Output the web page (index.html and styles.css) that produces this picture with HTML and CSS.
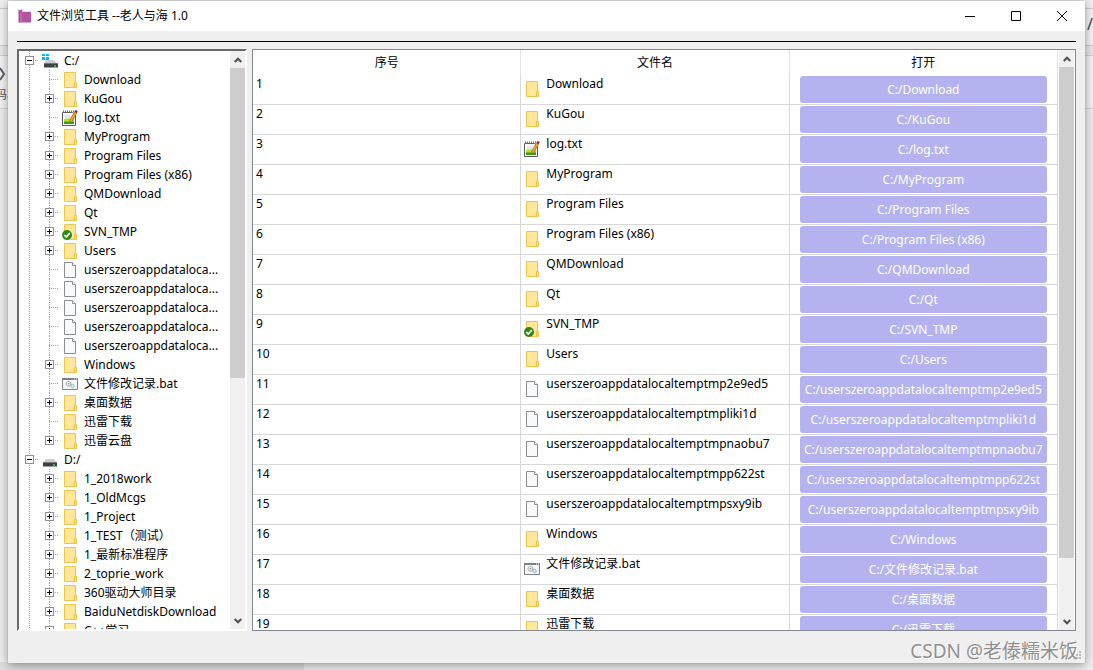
FILE: index.html
```html
<!DOCTYPE html>
<html lang="zh-CN">
<head>
<meta charset="utf-8">
<title>文件浏览工具 --老人与海 1.0</title>
<link rel="stylesheet" href="styles.css">
</head>
<body>
<svg class="sprite" aria-hidden="true">
  <symbol id="i-folder" viewBox="0 0 16 16">
    <path d="M2.500.5h11v10h1v5h-12z" fill="#ffe699" stroke="#ebc64f"/>
    <path d="M12.500 15v-4.500h1" fill="none" stroke="#e6bf42"/>
  </symbol>
  <symbol id="i-file" viewBox="0 0 16 16">
    <path d="M2.500.5h8l3 3v12h-11z" fill="#f8f9fa" stroke="#8b8d8f"/>
    <path d="M10.500.5v3h3" fill="#fff" stroke="#8b8d8f"/>
  </symbol>
  <symbol id="i-svn" viewBox="0 0 16 16">
    <use href="#i-folder"/>
    <circle cx="5" cy="11" r="5" fill="#2f8a12"/>
    <path d="M2.300 11l2 2 3.500-4" fill="none" stroke="#fff" stroke-width="1.700"/>
  </symbol>
  <symbol id="i-note" viewBox="0 0 16 16">
    <path d="M.5 2.500h10l3 3v10H.5z" fill="#fff" stroke="#5b5b5b"/>
    <path d="M1 1.500h11" stroke="#777" stroke-width="2" stroke-dasharray="1 1"/>
    <path d="M3 6h5M3 8h5" stroke="#c9cdd0"/>
    <path d="M2 9l10-1v6H2z" fill="#b8e030"/>
    <path d="M2 11.500h10V14H2z" fill="#3c9b16"/>
    <path d="M13.500 2.500l-5 9" stroke="#8a5a12" stroke-width="3"/>
    <path d="M13.500 2.500l-5 9" stroke="#f2a51e" stroke-width="2"/>
    <path d="M13.500 2.500l1.200-2" stroke="#a01818" stroke-width="2.500"/>
  </symbol>
  <symbol id="i-bat" viewBox="0 0 16 16">
    <path d="M.5 2.500h15v11H.5z" fill="#f4f6f7" stroke="#7d8184"/>
    <path d="M0 3h16" stroke="#7d8184" stroke-width="2"/>
    <path d="M12 3h1M14 3h1" stroke="#fff"/>
    <circle cx="6.500" cy="7.800" r="2.400" fill="#eee" stroke="#8b8f92" stroke-dasharray="1.200 .4"/>
    <circle cx="6.500" cy="7.800" r=".8" fill="#8b8f92"/>
    <circle cx="10.500" cy="10" r="1.700" fill="#d8effa" stroke="#6fa9c8" stroke-dasharray="1.200 .3"/>
  </symbol>
  <symbol id="i-drive" viewBox="0 0 16 16">
    <path d="M4 7h8l3 4H1z" fill="#c9cbcc"/>
    <path d="M1 10.500h14v4H1z" fill="#3d4145"/>
    <path d="M1 10.500h14" stroke="#73777a"/>
    <path d="M11 13h2" stroke="#36e03c" stroke-width="1.500"/>
  </symbol>
  <symbol id="i-system" viewBox="0 0 16 16">
    <path d="M4 7h8l3 4H2z" fill="#c9cbcc"/>
    <path d="M2 10.500h14v4H2z" fill="#3d4145"/>
    <path d="M2 10.500h14" stroke="#73777a"/>
    <path d="M12 13h2" stroke="#36e03c" stroke-width="1.500"/>
    <path d="M0 1h3v2H0zM4 1h3v2H4zM0 4h3v3H0zM4 4h3v3H4z" fill="#0cb4ef"/>
  </symbol>
  <symbol id="i-up" viewBox="0 0 8 6"><path d="M.7 5L4 1.700 7.300 5" fill="none" stroke="#505050" stroke-width="2"/></symbol>
  <symbol id="i-down" viewBox="0 0 8 6"><path d="M.7 1L4 4.300 7.300 1" fill="none" stroke="#505050" stroke-width="2"/></symbol>
</svg>

<div class="backdrop" aria-hidden="true">
  <svg class="back-arrow" viewBox="0 0 6 14"><path d="M0 1l4 6-4 6" fill="none" stroke="#5d6068" stroke-width="2"/></svg>
  <span class="back-label">码块</span>
  <span class="back-slash">/</span>
  <span class="back-strip"></span>
</div>

<main class="window">
  <header class="titlebar">
    <svg class="logo" viewBox="0 0 14 14"><path d="M1 1.500l3-1 1 1.500h8v11.500H1z" fill="#b653a0"/><path d="M4 2.500h9" stroke="#f1d5eb"/><path d="M3 4v9.500" stroke="#d07fbe"/><path d="M1 .5v13" stroke="#a04590"/></svg>
    <h1>文件浏览工具 --老人与海 1.0</h1>
    <button class="win-btn" aria-label="最小化"><svg viewBox="0 0 10 10"><path d="M0 5.500h10" stroke="#000"/></svg></button>
    <button class="win-btn" aria-label="最大化"><svg viewBox="0 0 10 10"><path d="M.5.5h9v9h-9z" fill="none" stroke="#000"/></svg></button>
    <button class="win-btn" aria-label="关闭"><svg viewBox="0 0 10 10"><path d="M0 0l10 10M10 0L0 10" stroke="#000"/></svg></button>
  </header>
  <div class="rule"></div>

  <div class="panels">
    <nav class="tree-panel">
      <ul class="tree">
        <li class="drive"><div class="row"><span class="branch"><button class="toggle open" aria-label="C:/"></button></span><svg class="icon"><use href="#i-system"/></svg><span>C:/</span></div>
          <ul>
            <li><span class="branch"></span><svg class="icon"><use href="#i-folder"/></svg><span>Download</span></li>
            <li><span class="branch"><button class="toggle" aria-label="KuGou"></button></span><svg class="icon"><use href="#i-folder"/></svg><span>KuGou</span></li>
            <li><span class="branch"></span><svg class="icon"><use href="#i-note"/></svg><span>log.txt</span></li>
            <li><span class="branch"><button class="toggle" aria-label="MyProgram"></button></span><svg class="icon"><use href="#i-folder"/></svg><span>MyProgram</span></li>
            <li><span class="branch"><button class="toggle" aria-label="Program Files"></button></span><svg class="icon"><use href="#i-folder"/></svg><span>Program Files</span></li>
            <li><span class="branch"><button class="toggle" aria-label="Program Files (x86)"></button></span><svg class="icon"><use href="#i-folder"/></svg><span>Program Files (x86)</span></li>
            <li><span class="branch"><button class="toggle" aria-label="QMDownload"></button></span><svg class="icon"><use href="#i-folder"/></svg><span>QMDownload</span></li>
            <li><span class="branch"><button class="toggle" aria-label="Qt"></button></span><svg class="icon"><use href="#i-folder"/></svg><span>Qt</span></li>
            <li><span class="branch"><button class="toggle" aria-label="SVN_TMP"></button></span><svg class="icon"><use href="#i-svn"/></svg><span>SVN_TMP</span></li>
            <li><span class="branch"><button class="toggle" aria-label="Users"></button></span><svg class="icon"><use href="#i-folder"/></svg><span>Users</span></li>
            <li><span class="branch"></span><svg class="icon"><use href="#i-file"/></svg><span>userszeroappdataloca...</span></li>
            <li><span class="branch"></span><svg class="icon"><use href="#i-file"/></svg><span>userszeroappdataloca...</span></li>
            <li><span class="branch"></span><svg class="icon"><use href="#i-file"/></svg><span>userszeroappdataloca...</span></li>
            <li><span class="branch"></span><svg class="icon"><use href="#i-file"/></svg><span>userszeroappdataloca...</span></li>
            <li><span class="branch"></span><svg class="icon"><use href="#i-file"/></svg><span>userszeroappdataloca...</span></li>
            <li><span class="branch"><button class="toggle" aria-label="Windows"></button></span><svg class="icon"><use href="#i-folder"/></svg><span>Windows</span></li>
            <li><span class="branch"></span><svg class="icon"><use href="#i-bat"/></svg><span>文件修改记录.bat</span></li>
            <li><span class="branch"><button class="toggle" aria-label="桌面数据"></button></span><svg class="icon"><use href="#i-folder"/></svg><span>桌面数据</span></li>
            <li><span class="branch"></span><svg class="icon"><use href="#i-folder"/></svg><span>迅雷下载</span></li>
            <li><span class="branch last"><button class="toggle" aria-label="迅雷云盘"></button></span><svg class="icon"><use href="#i-folder"/></svg><span>迅雷云盘</span></li>
          </ul>
        </li>
        <li class="drive"><div class="row"><span class="branch"><button class="toggle open" aria-label="D:/"></button></span><svg class="icon"><use href="#i-drive"/></svg><span>D:/</span></div>
          <ul>
            <li><span class="branch"><button class="toggle" aria-label="1_2018work"></button></span><svg class="icon"><use href="#i-folder"/></svg><span>1_2018work</span></li>
            <li><span class="branch"><button class="toggle" aria-label="1_OldMcgs"></button></span><svg class="icon"><use href="#i-folder"/></svg><span>1_OldMcgs</span></li>
            <li><span class="branch"><button class="toggle" aria-label="1_Project"></button></span><svg class="icon"><use href="#i-folder"/></svg><span>1_Project</span></li>
            <li><span class="branch"><button class="toggle" aria-label="1_TEST(测试)"></button></span><svg class="icon"><use href="#i-folder"/></svg><span>1_TEST（测试）</span></li>
            <li><span class="branch"><button class="toggle" aria-label="1_最新标准程序"></button></span><svg class="icon"><use href="#i-folder"/></svg><span>1_最新标准程序</span></li>
            <li><span class="branch"><button class="toggle" aria-label="2_toprie_work"></button></span><svg class="icon"><use href="#i-folder"/></svg><span>2_toprie_work</span></li>
            <li><span class="branch"><button class="toggle" aria-label="360驱动大师目录"></button></span><svg class="icon"><use href="#i-folder"/></svg><span>360驱动大师目录</span></li>
            <li><span class="branch"><button class="toggle" aria-label="BaiduNetdiskDownload"></button></span><svg class="icon"><use href="#i-folder"/></svg><span>BaiduNetdiskDownload</span></li>
            <li><span class="branch"><button class="toggle" aria-label="C++学习"></button></span><svg class="icon"><use href="#i-folder"/></svg><span>C++学习</span></li>
          </ul>
        </li>
      </ul>
      <div class="scrollbar tree-scroll">
        <button aria-label="向上滚动"><svg><use href="#i-up"/></svg></button>
        <div class="track"><div class="thumb"></div></div>
        <button aria-label="向下滚动"><svg><use href="#i-down"/></svg></button>
      </div>
    </nav>

    <section class="table-panel">
      <div class="table-view">
        <table>
          <thead><tr><th scope="col">序号</th><th scope="col">文件名</th><th scope="col">打开</th></tr></thead>
          <tbody>
            <tr><td>1</td><td><div class="name"><svg class="icon"><use href="#i-folder"/></svg>Download</div></td><td><button class="open-btn">C:/Download</button></td></tr>
            <tr><td>2</td><td><div class="name"><svg class="icon"><use href="#i-folder"/></svg>KuGou</div></td><td><button class="open-btn">C:/KuGou</button></td></tr>
            <tr><td>3</td><td><div class="name"><svg class="icon"><use href="#i-note"/></svg>log.txt</div></td><td><button class="open-btn">C:/log.txt</button></td></tr>
            <tr><td>4</td><td><div class="name"><svg class="icon"><use href="#i-folder"/></svg>MyProgram</div></td><td><button class="open-btn">C:/MyProgram</button></td></tr>
            <tr><td>5</td><td><div class="name"><svg class="icon"><use href="#i-folder"/></svg>Program Files</div></td><td><button class="open-btn">C:/Program Files</button></td></tr>
            <tr><td>6</td><td><div class="name"><svg class="icon"><use href="#i-folder"/></svg>Program Files (x86)</div></td><td><button class="open-btn">C:/Program Files (x86)</button></td></tr>
            <tr><td>7</td><td><div class="name"><svg class="icon"><use href="#i-folder"/></svg>QMDownload</div></td><td><button class="open-btn">C:/QMDownload</button></td></tr>
            <tr><td>8</td><td><div class="name"><svg class="icon"><use href="#i-folder"/></svg>Qt</div></td><td><button class="open-btn">C:/Qt</button></td></tr>
            <tr><td>9</td><td><div class="name"><svg class="icon"><use href="#i-svn"/></svg>SVN_TMP</div></td><td><button class="open-btn">C:/SVN_TMP</button></td></tr>
            <tr><td>10</td><td><div class="name"><svg class="icon"><use href="#i-folder"/></svg>Users</div></td><td><button class="open-btn">C:/Users</button></td></tr>
            <tr><td>11</td><td><div class="name"><svg class="icon"><use href="#i-file"/></svg>userszeroappdatalocaltemptmp2e9ed5</div></td><td><button class="open-btn">C:/userszeroappdatalocaltemptmp2e9ed5</button></td></tr>
            <tr><td>12</td><td><div class="name"><svg class="icon"><use href="#i-file"/></svg>userszeroappdatalocaltemptmpliki1d</div></td><td><button class="open-btn">C:/userszeroappdatalocaltemptmpliki1d</button></td></tr>
            <tr><td>13</td><td><div class="name"><svg class="icon"><use href="#i-file"/></svg>userszeroappdatalocaltemptmpnaobu7</div></td><td><button class="open-btn">C:/userszeroappdatalocaltemptmpnaobu7</button></td></tr>
            <tr><td>14</td><td><div class="name"><svg class="icon"><use href="#i-file"/></svg>userszeroappdatalocaltemptmpp622st</div></td><td><button class="open-btn">C:/userszeroappdatalocaltemptmpp622st</button></td></tr>
            <tr><td>15</td><td><div class="name"><svg class="icon"><use href="#i-file"/></svg>userszeroappdatalocaltemptmpsxy9ib</div></td><td><button class="open-btn">C:/userszeroappdatalocaltemptmpsxy9ib</button></td></tr>
            <tr><td>16</td><td><div class="name"><svg class="icon"><use href="#i-folder"/></svg>Windows</div></td><td><button class="open-btn">C:/Windows</button></td></tr>
            <tr><td>17</td><td><div class="name"><svg class="icon"><use href="#i-bat"/></svg>文件修改记录.bat</div></td><td><button class="open-btn">C:/文件修改记录.bat</button></td></tr>
            <tr><td>18</td><td><div class="name"><svg class="icon"><use href="#i-folder"/></svg>桌面数据</div></td><td><button class="open-btn">C:/桌面数据</button></td></tr>
            <tr><td>19</td><td><div class="name"><svg class="icon"><use href="#i-folder"/></svg>迅雷下载</div></td><td><button class="open-btn">C:/迅雷下载</button></td></tr>
          </tbody>
        </table>
      </div>
      <div class="scrollbar table-scroll">
        <button aria-label="向上滚动"><svg><use href="#i-up"/></svg></button>
        <div class="track"><div class="thumb"></div></div>
        <button aria-label="向下滚动"><svg><use href="#i-down"/></svg></button>
      </div>
    </section>
  </div>

  <svg class="grip" viewBox="0 0 10 10" aria-hidden="true"><path d="M6 0h2v2H6zM3 3h2v2H3zM6 3h2v2H6zM0 6h2v2H0zM3 6h2v2H3zM6 6h2v2H6z" fill="#bdbdbd"/></svg>
  <p class="watermark">CSDN @老傣糯米饭</p>
</main>
</body>
</html>
```

FILE: styles.css
```css
* { box-sizing: border-box; }

body {
  margin: 0;
  height: 100vh;
  padding: 1px 8px 7px;
  overflow: hidden;
  background: linear-gradient(#f0f0f0 0 8px, #cfcfcf 8px 9px, #f5f5f5 9px 45px, #cfcfcf 45px 46px, #e9e9e9 46px 55px, #d2d2d2 55px 56px, #f4f4f4 56px 108px, #d6d6d6 108px 109px, #efefef 109px);
  font: 12px/18px "Noto Sans", "Noto Sans CJK SC", sans-serif;
  color: #000;
}

ul { list-style: none; margin: 0; padding: 0; }
button { font: inherit; border: 0; padding: 0; margin: 0; background: none; }
.sprite { display: none; }
.icon { width: 16px; height: 16px; flex: none; }

/* Page behind the window */
.backdrop { position: absolute; inset: 0; overflow: hidden; color: #555; }
.back-arrow { position: absolute; left: 0; top: 67px; width: 6px; height: 14px; }
.back-label { position: absolute; left: -5px; top: 86px; }
.back-slash { position: absolute; right: 0; top: 15px; font-size: 16px; color: #345; }
.back-strip { position: absolute; left: 0; bottom: 0; width: 304px; height: 8px; background: #dedede; }

.window {
  position: relative;
  height: 100%;
  display: flex;
  flex-direction: column;
  padding-bottom: 32px;
  background: #efefef;
  box-shadow: 0 0 1px #999, 0 2px 10px rgba(0, 0, 0, .4);
}

.titlebar { display: flex; align-items: center; height: 30px; background: #fff; padding-left: 10px; flex: none; }
.logo { width: 14px; height: 14px; margin-right: 5px; }
.titlebar h1 { flex: 1; margin: 0; font-size: 12px; font-weight: 400; }
.win-btn { width: 46px; height: 30px; display: grid; place-items: center; }
.win-btn svg { width: 10px; height: 10px; overflow: visible; }
.rule { height: 1px; background: #000; margin: 10px 9px 7px; flex: none; }

.panels { flex: 1; min-height: 0; display: flex; gap: 5px; padding: 0 9px; }

.tree-panel {
  width: 230px;
  flex: none;
  display: flex;
  background: #fff;
  border: 2px solid;
  border-color: #696969 #fff #fff #696969;
}
.tree { flex: 1; min-width: 0; overflow: hidden; background: repeating-linear-gradient(#a0a0a0 0 1px, transparent 1px 2px) 10px 0 / 1px 100% no-repeat; }
.row, .drive li { display: flex; align-items: center; height: 19px; white-space: nowrap; }
.drive li { margin-left: 20px; }
.tree .icon { margin: 0 6px 0 3px; }
.branch {
  width: 20px;
  height: 19px;
  flex: none;
  padding: 5px 0 0 6px;
  background:
    repeating-linear-gradient(90deg, #a0a0a0 0 1px, transparent 1px 2px) 10px 9px / 10px 1px no-repeat,
    repeating-linear-gradient(#a0a0a0 0 1px, transparent 1px 2px) 10px 0 / 1px 100% no-repeat;
}
.branch.last { background-size: 10px 1px, 1px 9px; }
.row .branch { background-size: 10px 1px, 0 0; }
.toggle {
  display: block;
  width: 9px;
  height: 9px;
  border: 1px solid #919191;
  background:
    linear-gradient(#000, #000) center / 5px 1px no-repeat,
    linear-gradient(#000, #000) center / 1px 5px no-repeat,
    #fff;
}
.toggle.open { background: linear-gradient(#000, #000) center / 5px 1px no-repeat, #fff; }

.table-panel { flex: 1; min-width: 0; display: flex; background: #fff; border: 1px solid #828790; }
.table-view { flex: 1; min-width: 0; overflow: hidden; }
table { width: 100%; border-collapse: separate; border-spacing: 0; table-layout: fixed; }
th { height: 25px; padding: 0; font-weight: 400; border-right: 1px solid #e5e5e5; }
td { height: 30px; padding: 0 3px; vertical-align: top; border-right: 1px solid #d8d8d8; border-bottom: 1px solid #d8d8d8; white-space: nowrap; }
td:last-child { padding: 1px 10px 0; }
.name { display: flex; gap: 6px; }
.name .icon { margin-top: 6px; }
.open-btn { display: block; width: 100%; height: 27px; border-radius: 3px; background: #b4b3f0; color: #fff; text-align: center; overflow: hidden; }

.scrollbar { width: 15px; flex: none; display: flex; flex-direction: column; background: #f0f0f0; }
.scrollbar button { height: 17px; display: grid; place-items: center; flex: none; }
.scrollbar svg { width: 8px; height: 6px; }
.track { flex: 1; min-height: 0; }
.thumb { background: #cdcdcd; }
.tree-scroll .thumb { height: 57%; }
.table-scroll { margin: 0 1px; }
.table-scroll .thumb { height: 90%; }

.grip { position: absolute; right: 2px; bottom: 2px; width: 10px; height: 10px; }
.watermark {
  position: absolute;
  right: 7px;
  bottom: 0;
  margin: 0;
  font-size: 19px;
  line-height: 24px;
  color: #8f8f8f;
  text-shadow: 1px 1px 0 #fff;
}
```
